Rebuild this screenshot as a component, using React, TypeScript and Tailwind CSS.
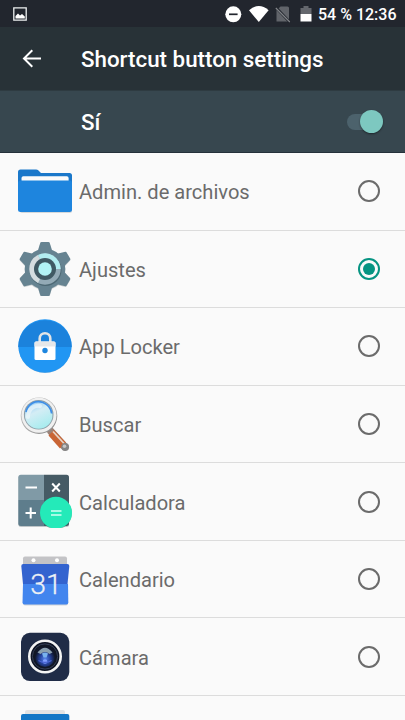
import React from "react";

interface ShortcutApp {
  id: string;
  name: string;
  height: string;
  offset?: string;
  icon: React.ReactNode;
}

const FolderIcon = () => (
  <svg className="size-[54px]" viewBox="0 0 54 54">
    <path d="M2 47q0 2 2 2h48q2 0 2-2v-2H0z" fill="#d5d8da" />
    <path d="M0 8q0-2.500 2.500-2.500h15.500q1.500 0 2.500 1l2.500 2.500h28.500q2.500 0 2.500 2.500v34H0z" fill="#1b78ca" />
    <path d="M3.500 14q0-1.800 1.800-1.800h43.500q1.800 0 1.800 1.800v4h-47z" fill="#fbfbfb" />
    <path d="M0 19q0-2.500 2.500-2.500h49q2.500 0 2.500 2.500v26.500q0 2.500-2.500 2.500h-49q-2.500 0-2.500-2.500z" fill="#1e85de" />
  </svg>
);

const GearIcon = () => (
  <svg className="size-[54px]" viewBox="0 0 54 54">
    <defs>
      <g id="gear">
        <circle cx="27" cy="27" r="20.300" />
        <path id="tooth" d="M19.500 10 22.300 0.800q.3-.8 1.200-.8h7q.9 0 1.200.8L34.500 10z" />
        <use href="#tooth" transform="rotate(60 27 27)" />
        <use href="#tooth" transform="rotate(120 27 27)" />
        <use href="#tooth" transform="rotate(180 27 27)" />
        <use href="#tooth" transform="rotate(240 27 27)" />
        <use href="#tooth" transform="rotate(300 27 27)" />
      </g>
    </defs>
    <use href="#gear" fill="#c9ced0" y="0.800" />
    <use href="#gear" fill="#668391" />
    <circle cx="27.500" cy="28" r="16" fill="#4d6874" />
    <circle cx="27" cy="27" r="15.700" fill="#93aab6" />
    <path d="M27 27 20 13A15.700 15.700 0 0 0 20 41z" fill="#d4dcdf" />
    <path d="M27 27 20 13A15.700 15.700 0 0 1 42.700 27z" fill="#b2edf0" />
    <circle cx="27" cy="27" r="11" fill="#405963" />
    <circle cx="27" cy="27" r="6.800" fill="#b2f3f5" />
  </svg>
);

const LockIcon = () => (
  <svg className="size-[54px]" viewBox="0 0 54 54">
    <circle cx="27" cy="27.500" r="26.400" fill="#bfcbd4" />
    <circle cx="27" cy="27" r="26.700" fill="#2196f3" />
    <path d="M.3 28a26.700 26.700 0 0 1 53.400 0z" fill="#1b82dc" />
    <path d="M21.700 24v-4.500a5.300 5.300 0 0 1 10.600 0V24" fill="none" stroke="#e3e5e6" strokeWidth="2.600" />
    <rect x="16.500" y="22.500" width="21" height="18.500" rx="1.500" fill="#fff" />
    <path d="M16.500 27.500V24q0-1.500 1.500-1.500h18q1.500 0 1.500 1.500v3.500z" fill="#e5e7e9" />
    <circle cx="27" cy="31.500" r="2.700" fill="#1d86df" />
  </svg>
);

const SearchIcon = () => (
  <svg className="size-[54px]" viewBox="0 0 54 54">
    <defs>
      <linearGradient id="glass" x1=".2" y1="0" x2=".7" y2="1">
        <stop offset="0" stopColor="#8cc8f4" />
        <stop offset=".4" stopColor="#d4edf5" />
        <stop offset="1" stopColor="#a4ecee" />
      </linearGradient>
      <linearGradient id="rim" x1="0" y1="0" x2="1" y2="1">
        <stop offset="0" stopColor="#d0d0d0" />
        <stop offset="1" stopColor="#858585" />
      </linearGradient>
    </defs>
    <path d="m30 31 4 4" stroke="#555" strokeWidth="4" />
    <path d="m33 34.500 13.500 15" stroke="#9c8378" strokeWidth="7.500" strokeLinecap="round" />
    <path d="M30.500 38.500 36 33l12 12.500-6 6z" fill="#c96535" />
    <path d="m35 34.500 11 12" stroke="#e6d6c8" strokeWidth="1.800" />
    <circle cx="47.200" cy="50" r="3.900" fill="#858585" />
    <circle cx="46.500" cy="49.200" r="1.800" fill="#c5c5c5" />
    <circle cx="21" cy="18.700" r="18.300" fill="url(#rim)" />
    <circle cx="21" cy="18.300" r="17.500" fill="#f0f0f0" />
    <circle cx="20.700" cy="17.700" r="14.800" fill="#8d9ea7" />
    <circle cx="20.700" cy="18" r="13.800" fill="url(#glass)" />
    <path d="M8 15C10 6 18 3 25 5.500c5 2 8 6 8.700 11" fill="none" stroke="#3f8fe8" strokeWidth="1.800" />
    <path d="M10 20C10 12 16 8 22 9" fill="none" stroke="#edf7fb" strokeWidth="4" strokeLinecap="round" opacity=".7" />
  </svg>
);

const CalculatorIcon = () => (
  <svg className="size-[54px]" viewBox="0 0 54 54">
    <defs>
      <clipPath id="pad">
        <rect x=".3" y=".7" width="50.700" height="51.300" rx="2.500" />
      </clipPath>
    </defs>
    <rect x=".5" y="2" width="50.500" height="51" rx="2.500" fill="#bfc5c8" />
    <g clipPath="url(#pad)">
      <path d="M0 0h26v26H0z" fill="#809aa6" />
      <path d="M26 0h26v26H26z" fill="#465b65" />
      <path d="M0 26h26v27H0z" fill="#5e7d8c" />
      <path d="M26 26h26v27H26z" fill="#465b65" />
    </g>
    <circle cx="38" cy="39.200" r="16" fill="#35725f" opacity=".5" />
    <circle cx="38" cy="38.700" r="16" fill="#24eab9" />
    <path
      d="M7.500 13.500H19M34.200 9.500l7.600 8M41.800 9.500l-7.600 8M7.500 39H18M12.700 33.500v11"
      fill="none"
      stroke="#fff"
      strokeWidth="2"
    />
    <path d="M33 37h10.500M33 41h10.500" stroke="#d2fff3" strokeWidth="1.700" />
  </svg>
);

const CalendarIcon = () => (
  <svg className="size-[54px]" viewBox="0 0 54 54">
    <path d="M5 13V6.500q0-2 2-2h40q2 0 2 2V13z" fill="#c3c3c6" />
    <circle cx="15.500" cy="8.300" r="2" fill="#fff" />
    <circle cx="39" cy="8.300" r="2" fill="#fff" />
    <path d="M5 51.500q0 2 2 2h41q2 0 2-2z" fill="#d2d4d7" />
    <path d="M5 32h45l.3 18.500q0 2-2 2H6.500q-2 0-2-2z" fill="#4285ee" />
    <path d="M3.300 14q0-2 2-2h44q2 0 2 2L49.500 32H5z" fill="#3363cf" />
    <text
      x="28"
      y="42"
      textAnchor="middle"
      fontSize="28.500"
      fontWeight="300"
      fill="#edf0f5"
      stroke="#edf0f5"
      strokeWidth="0.300"
      className="font-['Roboto',sans-serif]"
    >
      31
    </text>
  </svg>
);

const CameraIcon = () => (
  <svg className="size-[54px]" viewBox="0 0 54 54">
    <defs>
      <radialGradient id="lens" cx=".5" cy=".6" r=".5">
        <stop offset="0" stopColor="#5a87ef" />
        <stop offset=".5" stopColor="#2745a2" />
        <stop offset="1" stopColor="#10172e" />
      </radialGradient>
    </defs>
    <rect x="3" y="3.800" width="48.300" height="48.300" rx="9" fill="#202c47" />
    <circle cx="27" cy="27.500" r="15.700" fill="#0e1424" stroke="#f4f4f4" strokeWidth="2.600" />
    <circle cx="27" cy="27.500" r="12.600" fill="#111725" stroke="#374058" strokeWidth="1" />
    <circle cx="27" cy="28" r="10" fill="url(#lens)" />
    <path d="M19.500 23.500Q27 14 34.500 23.500l-3 1.500q-4.500-4-9 0z" fill="#8a9fae" />
    <path d="M24 24.500q3-2 6 0l-1.500 4h-3z" fill="#79b2ee" />
    <circle cx="27" cy="32.500" r="2.300" fill="#83a0ff" />
    <path d="M20.500 31.500q6.500 4 13 0" fill="none" stroke="#4c66d5" strokeWidth="1.300" />
  </svg>
);

const StackIcon = () => (
  <svg className="size-[54px]" viewBox="0 0 54 54">
    <path d="M7 10V5q0-2 2-2h36q2 0 2 2v5z" fill="#e3e3e3" />
    <path d="M3 9q0-2 2-2h44.300q2 0 2 2v42H3z" fill="#1477c6" />
  </svg>
);

const apps: ShortcutApp[] = [
  { id: "files", name: "Admin. de archivos", height: "h-[78px]", icon: <FolderIcon /> },
  { id: "settings", name: "Ajustes", height: "h-[77px]", icon: <GearIcon /> },
  { id: "locker", name: "App Locker", height: "h-[78px]", icon: <LockIcon /> },
  { id: "search", name: "Buscar", height: "h-[77px]", icon: <SearchIcon /> },
  { id: "calculator", name: "Calculadora", height: "h-[78px]", offset: "pt-px", icon: <CalculatorIcon /> },
  { id: "calendar", name: "Calendario", height: "h-[77px]", icon: <CalendarIcon /> },
  { id: "camera", name: "Cámara", height: "h-[78px]", offset: "pt-px", icon: <CameraIcon /> },
];

const StatusBar = () => (
  <div className="flex h-[27px] shrink-0 items-center justify-between bg-[#22262e] pr-[9px] pl-[13px]">
    <svg className="size-[14px]" viewBox="0 0 14 14">
      <path d="M.8.8h12.400v12.400H.8z" fill="none" stroke="#eef1f1" strokeWidth="1.300" />
      <path d="M2.500 11.500V9l2.500-2.500L7 8.500l2-1.500 2.800 2.500v2z" fill="#fff" />
    </svg>
    <div className="flex items-center">
      <svg className="h-[18px] w-[88px]" viewBox="0 0 88 18">
        <circle cx="8.300" cy="9.300" r="8" fill="#fff" />
        <path d="M4 9.300h8.600" stroke="#22262e" strokeWidth="1.700" />
        <path d="M24 5.200Q33.800-3.200 43.600 5.200L33.800 17z" fill="#fff" />
        <path d="M55.500 1.500h7q1.500 0 1.500 1.500v13.500H51.500v-11z" fill="#61646a" />
        <path d="m50.500 2 14.500 15.500" stroke="#22262e" strokeWidth="2.600" />
        <path d="m50.800 3 14 14" stroke="#85878b" strokeWidth="1.100" />
        <path d="M75.500 3h3V1h5v2h3v6h-11z" fill="#64676d" />
        <path d="M75.500 9h11v7.500h-11z" fill="#fff" />
      </svg>
      <span className="ml-[5px] w-[78px] pt-px text-base leading-[27px] font-medium whitespace-nowrap text-white">
        54 % 12:36
      </span>
    </div>
  </div>
);

const AppBar = () => (
  <header className="flex h-[63px] shrink-0 items-center bg-[#283237] pt-px pl-[22px]">
    <svg className="size-5" viewBox="0 0 20 20" fill="none" stroke="#fff" strokeWidth="2">
      <path d="M19 9.500H2.500M10.300 1.300 2 9.500l8.300 8.200" />
    </svg>
    <h1 className="ml-[39px] text-[22.35px] leading-8 font-medium whitespace-nowrap text-white">
      Shortcut button settings
    </h1>
  </header>
);

const SwitchBar = () => (
  <div className="flex h-[63px] shrink-0 items-center justify-between border-t border-b border-t-[#2e3b41] border-b-[#25313a] bg-[#37474f] pr-[22px] pl-[81px]">
    <span className="text-[22.35px] leading-8 font-medium text-white">Sí</span>
    <div className="flex h-4 w-9 items-center justify-end rounded-full bg-[#4c626c]">
      <div className="size-[23px] rounded-full bg-[#7dc8c0] shadow-[0_1px_2px_rgba(0,0,0,0.45)]" />
    </div>
  </div>
);

const App: React.FC = () => {
  const [selected, setSelected] = React.useState("settings");

  return (
    <div className="flex h-[720px] w-[405px] flex-col overflow-hidden bg-[#fafafa] font-['Roboto',sans-serif]">
      <StatusBar />
      <AppBar />
      <SwitchBar />

      {/* App list */}
      <ul>
        {apps.map((app) => (
          <li
            key={app.id}
            className={`flex items-start border-b border-[#dcdcdc] pr-[25px] pl-[18px] ${app.height}`}
            onClick={() => setSelected(app.id)}
          >
            <div className="mt-[11px]">{app.icon}</div>
            <div className={`flex flex-1 items-start ${app.offset ?? ""}`}>
              <span className="mt-[23px] ml-[7px] flex-1 text-[20.1px] leading-8 text-[#6b6b6b]">
                {app.name}
              </span>
              {selected === app.id ? (
                <div className="mt-[27px] flex size-[22px] items-center justify-center rounded-full border-2 border-[#069482]">
                  <div className="size-3 rounded-full bg-[#069482]" />
                </div>
              ) : (
                <div className="mt-[27px] size-[22px] rounded-full border-2 border-[#6b6b6b]" />
              )}
            </div>
          </li>
        ))}
        <li className="flex h-[78px] pt-[11px] pl-[18px]">
          <StackIcon />
        </li>
      </ul>
    </div>
  );
};

export default App;
